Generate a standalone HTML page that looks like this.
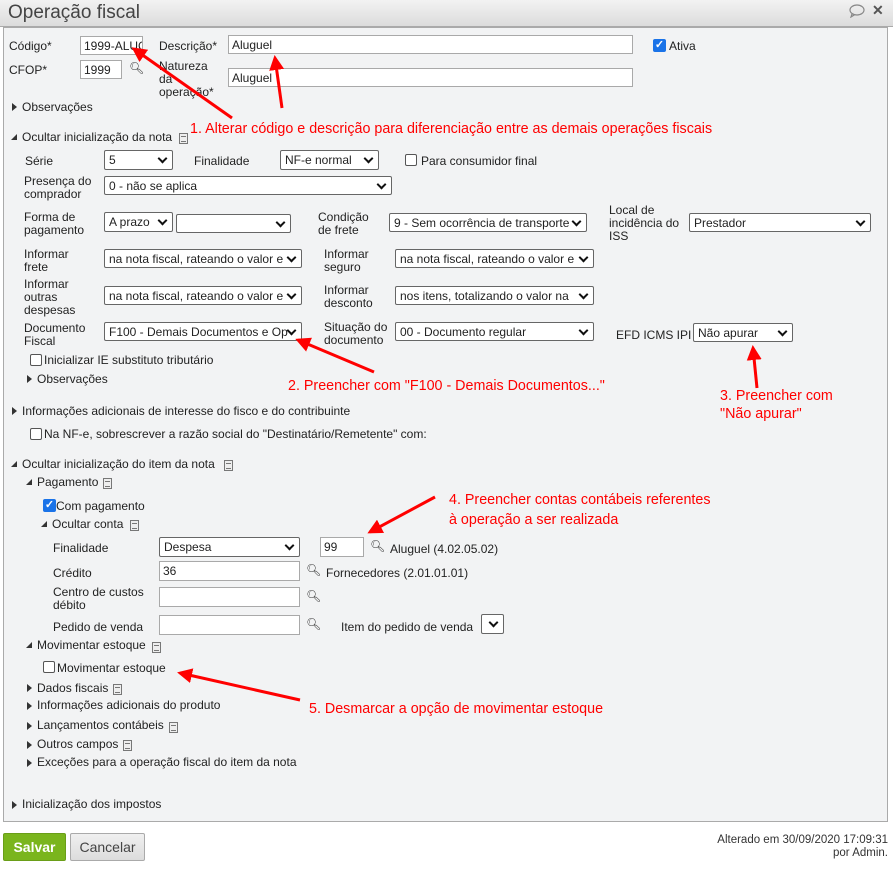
<!DOCTYPE html>
<html><head><meta charset="utf-8"><style>
*{box-sizing:border-box;margin:0;padding:0}
body{width:893px;height:875px;position:relative;background:#fff;font-family:"Liberation Sans",sans-serif;font-size:12px;color:#222;overflow:hidden}
.a{position:absolute;white-space:nowrap;line-height:13px}
.in{position:absolute;background:#fff;border:1px solid #a9a9a9;padding:3px 3px 0;font-size:12px;line-height:13px;white-space:nowrap;overflow:hidden}
.sel{position:absolute;background:#fff;border:1px solid #666;border-radius:2px;padding:3px 18px 0 4px;font-size:12px;line-height:13px;white-space:nowrap;overflow:hidden}
.sel:after{content:"";position:absolute;right:6px;top:4px;width:5px;height:5px;border-right:2px solid #111;border-bottom:2px solid #111;transform:rotate(45deg)}
.cb{position:absolute;width:12px;height:12px;border:1px solid #555;border-radius:2px;background:#fff}
.cbc{position:absolute;width:13px;height:13px;border-radius:2px;background:#1a73e8;color:#fff;font-size:11px;line-height:13px;text-align:center;font-weight:bold}
.tr{position:absolute;width:0;height:0;border-top:4px solid transparent;border-bottom:4px solid transparent;border-left:5px solid #333}
.td{position:absolute;width:0;height:0;border-left:6px solid transparent;border-bottom:6px solid #333}
.doc{position:absolute;width:9px;height:11px;border:1px solid #777;background:#eee}
.doc:before{content:"";position:absolute;left:1px;top:2px;width:5px;height:4px;border-top:1px solid #777;border-bottom:1px solid #777}
.s{position:absolute;font-size:12px;color:#333}
.red{position:absolute;color:#f00;font-size:14.3px;white-space:nowrap;line-height:18px}
</style></head><body>
<div style="position:absolute;left:0;top:0;width:893px;height:27px;background:linear-gradient(#f2f2f2,#dcdcdc);border-bottom:1px solid #aaa"></div>
<div class="a" style="left:8px;top:3px;font-size:19px;line-height:20px;color:#444">Operação fiscal</div>
<svg style="position:absolute;left:849px;top:4px" width="16" height="14"><ellipse cx="8" cy="6" rx="7" ry="5" fill="none" stroke="#888" stroke-width="1.2"/><path d="M3 10 L2 13 L6 10.5" fill="none" stroke="#888" stroke-width="1.2"/></svg>
<div class="a" style="left:872px;top:4px;font-size:14px;color:#555;font-weight:bold">✕</div>
<div style="position:absolute;left:3px;top:27px;width:885px;height:795px;background:#f2f3f4;border:1px solid #aaa"></div>

<div class="a" style="left:9px;top:40px">Código*</div>
<div class="in" style="left:80px;top:36px;width:63px;height:19px">1999-ALUG</div>
<div class="a" style="left:159px;top:40px">Descrição*</div>
<div class="in" style="left:228px;top:35px;width:405px;height:19px">Aluguel</div>
<div class="cbc" style="left:653px;top:39px">✓</div><div class="a" style="left:669px;top:40px">Ativa</div>
<div class="a" style="left:9px;top:64px">CFOP*</div>
<div class="in" style="left:80px;top:60px;width:42px;height:19px">1999</div>
<div class="s" style="left:129px;top:61px">🔍︎</div>
<div class="a" style="left:159px;top:60px;line-height:13px">Natureza<br>da<br>operação*</div>
<div class="in" style="left:228px;top:68px;width:405px;height:19px">Aluguel</div>

<div class="tr" style="left:12px;top:103px"></div><div class="a" style="left:22px;top:101px">Observações</div>
<div class="td" style="left:11px;top:134px"></div><div class="a" style="left:22px;top:131px">Ocultar inicialização da nota</div><div class="doc" style="left:179px;top:133px"></div>

<div class="a" style="left:25px;top:155px">Série</div>
<div class="sel" style="left:104px;top:150px;width:69px;height:20px">5</div>
<div class="a" style="left:194px;top:155px">Finalidade</div>
<div class="sel" style="left:280px;top:150px;width:99px;height:20px">NF-e normal</div>
<div class="cb" style="left:405px;top:154px"></div><div class="a" style="left:421px;top:155px">Para consumidor final</div>
<div class="a" style="left:24px;top:175px">Presença do<br>comprador</div>
<div class="sel" style="left:104px;top:176px;width:288px;height:19px">0 - não se aplica</div>

<div class="a" style="left:24px;top:211px">Forma de<br>pagamento</div>
<div class="sel" style="left:104px;top:212px;width:69px;height:20px">A prazo</div>
<div class="sel" style="left:176px;top:214px;width:115px;height:19px"></div>
<div class="a" style="left:318px;top:211px">Condição<br>de frete</div>
<div class="sel" style="left:389px;top:213px;width:198px;height:19px">9 - Sem ocorrência de transporte</div>
<div class="a" style="left:609px;top:204px">Local de<br>incidência do<br>ISS</div>
<div class="sel" style="left:689px;top:213px;width:182px;height:19px">Prestador</div>

<div class="a" style="left:24px;top:248px">Informar<br>frete</div>
<div class="sel" style="left:104px;top:249px;width:198px;height:19px">na nota fiscal, rateando o valor e</div>
<div class="a" style="left:324px;top:248px">Informar<br>seguro</div>
<div class="sel" style="left:395px;top:249px;width:199px;height:19px">na nota fiscal, rateando o valor e</div>
<div class="a" style="left:24px;top:278px">Informar<br>outras<br>despesas</div>
<div class="sel" style="left:104px;top:286px;width:198px;height:19px">na nota fiscal, rateando o valor e</div>
<div class="a" style="left:324px;top:284px">Informar<br>desconto</div>
<div class="sel" style="left:395px;top:286px;width:199px;height:19px">nos itens, totalizando o valor na</div>
<div class="a" style="left:24px;top:322px">Documento<br>Fiscal</div>
<div class="sel" style="left:104px;top:322px;width:198px;height:19px">F100 - Demais Documentos e Op</div>
<div class="a" style="left:324px;top:321px">Situação do<br>documento</div>
<div class="sel" style="left:395px;top:322px;width:199px;height:19px">00 - Documento regular</div>
<div class="a" style="left:616px;top:329px">EFD ICMS IPI</div>
<div class="sel" style="left:693px;top:323px;width:100px;height:19px">Não apurar</div>

<div class="cb" style="left:30px;top:354px"></div><div class="a" style="left:44px;top:354px">Inicializar IE substituto tributário</div>
<div class="tr" style="left:27px;top:375px"></div><div class="a" style="left:37px;top:373px">Observações</div>
<div class="tr" style="left:12px;top:407px"></div><div class="a" style="left:22px;top:405px">Informações adicionais de interesse do fisco e do contribuinte</div>
<div class="cb" style="left:30px;top:428px"></div><div class="a" style="left:44px;top:428px">Na NF-e, sobrescrever a razão social do "Destinatário/Remetente" com:</div>

<div class="td" style="left:11px;top:461px"></div><div class="a" style="left:22px;top:458px">Ocultar inicialização do item da nota</div><div class="doc" style="left:224px;top:460px"></div>
<div class="td" style="left:26px;top:479px"></div><div class="a" style="left:37px;top:476px">Pagamento</div><div class="doc" style="left:103px;top:478px"></div>
<div class="cbc" style="left:43px;top:499px">✓</div><div class="a" style="left:56px;top:500px">Com pagamento</div>
<div class="td" style="left:41px;top:521px"></div><div class="a" style="left:52px;top:518px">Ocultar conta</div><div class="doc" style="left:130px;top:520px"></div>

<div class="a" style="left:53px;top:542px">Finalidade</div>
<div class="sel" style="left:159px;top:537px;width:141px;height:20px">Despesa</div>
<div class="in" style="left:320px;top:537px;width:44px;height:20px">99</div>
<div class="s" style="left:370px;top:539px">🔍︎</div>
<div class="a" style="left:390px;top:543px">Aluguel (4.02.05.02)</div>
<div class="a" style="left:53px;top:567px">Crédito</div>
<div class="in" style="left:159px;top:561px;width:141px;height:20px">36</div>
<div class="s" style="left:306px;top:563px">🔍︎</div>
<div class="a" style="left:326px;top:567px">Fornecedores (2.01.01.01)</div>
<div class="a" style="left:53px;top:586px">Centro de custos<br>débito</div>
<div class="in" style="left:159px;top:587px;width:141px;height:20px"></div>
<div class="s" style="left:306px;top:589px">🔍︎</div>
<div class="a" style="left:53px;top:621px">Pedido de venda</div>
<div class="in" style="left:159px;top:615px;width:141px;height:20px"></div>
<div class="s" style="left:306px;top:617px">🔍︎</div>
<div class="a" style="left:341px;top:621px">Item do pedido de venda</div>
<div class="sel" style="left:481px;top:614px;width:23px;height:20px;padding:0"></div>

<div class="td" style="left:26px;top:642px"></div><div class="a" style="left:37px;top:639px">Movimentar estoque</div><div class="doc" style="left:152px;top:642px"></div>
<div class="cb" style="left:43px;top:661px"></div><div class="a" style="left:57px;top:662px">Movimentar estoque</div>
<div class="tr" style="left:27px;top:684px"></div><div class="a" style="left:37px;top:682px">Dados fiscais</div><div class="doc" style="left:113px;top:684px"></div>
<div class="tr" style="left:27px;top:702px"></div><div class="a" style="left:37px;top:699px">Informações adicionais do produto</div>
<div class="tr" style="left:27px;top:722px"></div><div class="a" style="left:37px;top:719px">Lançamentos contábeis</div><div class="doc" style="left:169px;top:722px"></div>
<div class="tr" style="left:27px;top:741px"></div><div class="a" style="left:37px;top:738px">Outros campos</div><div class="doc" style="left:123px;top:740px"></div>
<div class="tr" style="left:27px;top:759px"></div><div class="a" style="left:37px;top:756px">Exceções para a operação fiscal do item da nota</div>
<div class="tr" style="left:12px;top:801px"></div><div class="a" style="left:22px;top:798px">Inicialização dos impostos</div>

<div style="position:absolute;left:3px;top:833px;width:63px;height:28px;background:#7ab51d;border:1px solid #6a9e18;border-radius:2px;color:#fff;font-weight:bold;font-size:14px;line-height:26px;text-align:center">Salvar</div>
<div style="position:absolute;left:70px;top:833px;width:75px;height:28px;background:linear-gradient(#f0f0f0,#dcdcdc);border:1px solid #aaa;border-radius:2px;color:#444;font-size:14px;line-height:26px;text-align:center">Cancelar</div>
<div class="a" style="right:5px;top:834px;text-align:right;font-size:11.5px;color:#333">Alterado em 30/09/2020 17:09:31<br>por Admin.</div>

<div class="red" style="left:190px;top:120px">1. Alterar código e descrição para diferenciação entre as demais operações fiscais</div>
<div class="red" style="left:288px;top:377px">2. Preencher com "F100 - Demais Documentos..."</div>
<div class="red" style="left:720px;top:387px">3. Preencher com<br>"Não apurar"</div>
<div class="red" style="left:449px;top:490px;line-height:20px">4. Preencher contas contábeis referentes<br>à operação a ser realizada</div>
<div class="red" style="left:309px;top:700px">5. Desmarcar a opção de movimentar estoque</div>

<svg style="position:absolute;left:0;top:0" width="893" height="875">
<defs><marker id="h" markerWidth="5" markerHeight="5" refX="4" refY="2.5" orient="auto"><path d="M0 0 L5 2.5 L0 5z" fill="#f00"/></marker></defs>
<g stroke="#f00" stroke-width="3" marker-end="url(#h)">
<line x1="232" y1="118" x2="134" y2="49"/>
<line x1="282" y1="108" x2="275" y2="58"/>
<line x1="374" y1="372" x2="298" y2="340"/>
<line x1="757" y1="388" x2="753" y2="348"/>
<line x1="435" y1="497" x2="370" y2="532"/>
<line x1="300" y1="700" x2="180" y2="673"/>
</g></svg>
</body></html>
